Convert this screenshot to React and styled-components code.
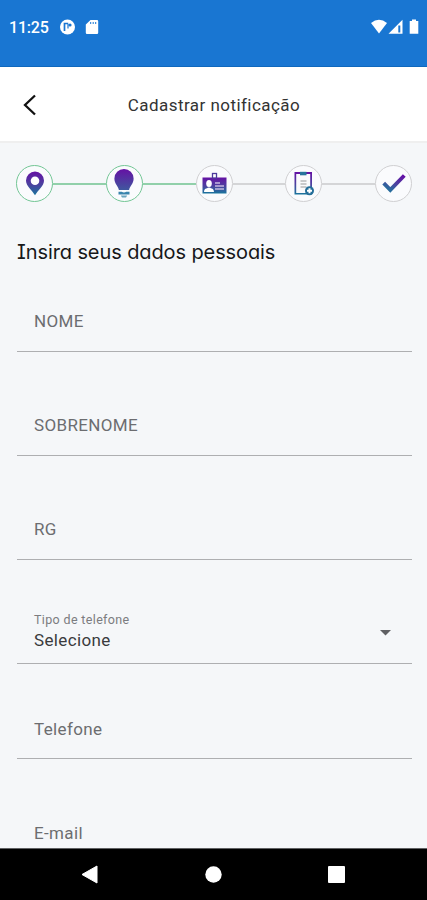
import { useState } from "react";
import styled, { createGlobalStyle } from "styled-components";

const GlobalStyle = createGlobalStyle`
* {
  box-sizing: border-box;
}
body {
  margin: 0;
  background: #f5f7f9;
  font-family: Roboto, sans-serif;
}
`;

const Screen = styled.div`
  display: flex;
  flex-direction: column;
  width: 100%;
  max-width: 427px;
  height: 900px;
  overflow: hidden;
  background: #f5f7f9;
`;

const StatusBar = styled.div`
  display: flex;
  align-items: center;
  justify-content: space-between;
  flex-shrink: 0;
  height: 67px;
  padding: 0 7px 13px 9px;
  background: #1976d2;
  border-bottom: 1px solid #0f68bd;
  color: white;
`;

const StatusGroup = styled.div`
  display: flex;
  align-items: center;
  svg {
    display: block;
  }
`;

const Clock = styled.span`
  width: 51px;
  font-size: 16px;
  font-weight: 500;
  line-height: 20px;
  letter-spacing: -0.2px;
  padding-top: 2px;
`;

const Header = styled.header`
  display: grid;
  grid-template-columns: 60px 1fr 59px;
  align-items: center;
  flex-shrink: 0;
  height: 76px;
  background: white;
  border-bottom: 2px solid #efefef;
`;

const BackButton = styled.button`
  display: flex;
  padding: 2px 0 0 22px;
  border: none;
  background: none;
`;

const HeaderTitle = styled.h1`
  margin: 0;
  padding-top: 1px;
  text-align: center;
  font-size: 17px;
  font-weight: 400;
  line-height: 22px;
  letter-spacing: 0.45px;
  color: #333;
`;

const Steps = styled.div`
  display: flex;
  align-items: center;
  flex-shrink: 0;
  padding: 22px 15px 0 16px;
`;

const StepCircle = styled.div`
  display: flex;
  flex-shrink: 0;
  width: 37px;
  height: 37px;
  border: 1.5px solid ${(props) => (props.$done ? "#73c695" : "#d0d0d2")};
  border-radius: 50%;
  background: #fafbfd;
  svg {
    display: block;
    margin: auto;
  }
`;

const StepLine = styled.div`
  flex: 1;
  height: 2px;
  background: ${(props) => (props.$done ? "#91d0aa" : "#d4d5d7")};
`;

const Form = styled.form`
  display: flex;
  flex-direction: column;
  flex: 1;
  min-height: 0;
  overflow: hidden;
  padding: 36px 15px 0 17px;
`;

const FormTitle = styled.h2`
  margin: 0 0 29px;
  font-family: Inter, sans-serif;
  font-size: 20px;
  font-weight: 400;
  font-feature-settings: "cv08", "cv11";
  line-height: 28px;
  letter-spacing: -0.1px;
  color: #17181a;
`;

const Field = styled.label`
  display: flex;
  align-items: center;
  flex-shrink: 0;
  height: 57px;
  margin-bottom: ${(props) => props.$gap || "47px"};
  padding: 0 17px ${(props) => props.$bottom || "4px"};
  border-bottom: 1px solid #aeafb1;
`;

const FieldText = styled.span`
  font-size: 17px;
  line-height: 20px;
  letter-spacing: 0.35px;
  color: #6c6d70;
`;

const SelectField = styled(Field)`
  justify-content: space-between;
  padding: 0 21px 4px 17px;
`;

const SelectContent = styled.span`
  display: flex;
  flex-direction: column;
  padding-bottom: 5px;
`;

const SelectLabel = styled.span`
  font-size: 12.5px;
  line-height: 18px;
  letter-spacing: 0.35px;
  color: #7b7c7f;
`;

const SelectValue = styled(FieldText)`
  line-height: 22px;
  color: #3a3b3d;
`;

const NavBar = styled.nav`
  display: flex;
  align-items: center;
  justify-content: space-between;
  flex-shrink: 0;
  height: 52px;
  padding: 0 82px 0 81px;
  border-top: 1px solid #606163;
  background: black;
  svg {
    display: block;
  }
`;

const Gradient = ({ id }) => (
  <linearGradient id={id} x1="0" y1="0" x2="0" y2="1">
    <stop offset="0" stopColor="#6511a4" />
    <stop offset="0.55" stopColor="#4b429f" />
    <stop offset="1" stopColor="#19769d" />
  </linearGradient>
);

const PinIcon = () => (
  <svg width="20" height="25" viewBox="0 0 20 25">
    <defs><Gradient id="pin" /></defs>
    <path d="M10 .5a9 9 0 0 0-9 9c0 5.800 6 9.500 9 14.800 3-5.300 9-9 9-14.800a9 9 0 0 0-9-9z" fill="url(#pin)" />
    <circle cx="10" cy="9.800" r="4.300" fill="#fff" />
  </svg>
);

const BulbIcon = () => (
  <svg width="20" height="30" viewBox="0 0 20 30">
    <defs>
      <linearGradient id="bulb" x1="0" y1="0" x2="0" y2="1">
        <stop offset="0" stopColor="#6511a4" />
        <stop offset="1" stopColor="#40579f" />
      </linearGradient>
    </defs>
    <path d="M10 0A9.600 9.600 0 0 0 .4 9.700c0 5 3.800 7 4.500 11.300h10.200c.7-4.300 4.500-6.300 4.500-11.300A9.600 9.600 0 0 0 10 0z" fill="url(#bulb)" />
    <path d="M4.500 22.800h3.200q2.300 1.600 4.600 0h3.200v2.600h-11z" fill="#3984ad" />
    <path d="M6.800 26.600h6.400L12 28.600H8z" fill="#6ba4bd" />
  </svg>
);

const BadgeIcon = () => (
  <svg width="25" height="23" viewBox="0 0 25 23">
    <defs><Gradient id="badge" /></defs>
    <path d="M.5 5.500h24v16H.5z" fill="url(#badge)" />
    <rect x="10.500" y="1.500" width="4" height="4.500" fill="#fff" stroke="#4c399c" strokeWidth="1.300" />
    <ellipse cx="7" cy="11.500" rx="2.800" ry="3.500" fill="#fff" />
    <path d="M2 20c.3-3.500 2-3.500 5-4.500 3 1 4.700 1 5 4.500z" fill="#fff" />
    <path d="M13 11h5M13 14h9M13 17h9" stroke="#c5b8df" strokeWidth="1.300" />
  </svg>
);

const ClipboardIcon = () => (
  <svg width="21" height="25" viewBox="-1 0 21 25">
    <defs><Gradient id="clip" /></defs>
    <path d="M.5 1h17.500v22.500H.5z" fill="url(#clip)" />
    <path d="M2.200 3h14v19h-14z" fill="#fafafc" />
    <path d="M6 .8h6.500v3.500H6z" fill="#28749c" />
    <path d="M6.500 10h6M6.500 13h6M6.500 16h6" stroke="#b9babb" strokeWidth="1.400" />
    <circle cx="15.500" cy="19.800" r="4.500" fill="#236d98" />
    <path d="M15.500 17.300v5M13 19.800h5" stroke="#fff" strokeWidth="2" />
  </svg>
);

const CheckIcon = () => (
  <svg width="24" height="20" viewBox="0 0 24 20">
    <defs>
      <linearGradient id="check" x1="1" y1="0" x2="0.3" y2="1">
        <stop offset="0" stopColor="#650ba6" />
        <stop offset="0.6" stopColor="#4b439f" />
        <stop offset="1" stopColor="#276c9d" />
      </linearGradient>
    </defs>
    <path d="M1.700 9.200l6.600 6.700L22.300 1.500" fill="none" stroke="url(#check)" strokeWidth="3.900" />
  </svg>
);

const steps = [
  { name: "local", icon: <PinIcon />, done: true },
  { name: "ideia", icon: <BulbIcon />, done: true },
  { name: "dados", icon: <BadgeIcon /> },
  { name: "resumo", icon: <ClipboardIcon /> },
  { name: "fim", icon: <CheckIcon /> },
];

function App() {
  const [phoneType] = useState("Selecione");

  return (
    <Screen>
      <GlobalStyle />
      <StatusBar>
        <StatusGroup>
          <Clock>11:25</Clock>
          <svg width="42" height="16" viewBox="0 0 42 16">
            <circle cx="7.500" cy="8" r="7.500" fill="#fff" />
            <path d="M4.500 12V4.500h3.800" fill="none" stroke="#1976d2" strokeWidth="1.700" />
            <path d="M8 5v4.500" stroke="#1976d2" strokeWidth="1.200" />
            <circle cx="10" cy="6" r="1.600" fill="#1976d2" />
            <path d="M30.500 1H37a1.200 1.200 0 0 1 1.200 1.200v11.600A1.200 1.200 0 0 1 37 15H27a1.200 1.200 0 0 1-1.200-1.200V5.500z" fill="#fff" />
            <path d="M30.700 3v2M33.200 3v2M35.700 3v2" stroke="#1976d2" strokeWidth="1" />
          </svg>
        </StatusGroup>
        <StatusGroup>
          <svg width="49" height="16" viewBox="0 0 49 16">
            <path d="M0 4Q8-2.500 16 4L8 14.500z" fill="#fff" />
            <path d="M17.500 14.700L31.500.8v13.900z" fill="#fff" />
            <path d="M28.300 6.500v7" stroke="#1976d2" strokeWidth="2" />
            <path d="M41 .5h4V2h2.300v12.700h-8.600V2H41z" fill="#fff" />
          </svg>
        </StatusGroup>
      </StatusBar>
      <Header>
        <BackButton aria-label="Voltar">
          <svg width="15" height="22" viewBox="0 0 15 22">
            <path d="M13 1.500L3 11l10 9.500" fill="none" stroke="#111" strokeWidth="2.300" />
          </svg>
        </BackButton>
        <HeaderTitle>Cadastrar notificação</HeaderTitle>
      </Header>
      <Steps>
        {steps.map((step, index) => [
          index > 0 && <StepLine key={step.name + "-line"} $done={index < 3} />,
          <StepCircle key={step.name} $done={step.done}>{step.icon}</StepCircle>,
        ])}
      </Steps>
      <Form>
        <FormTitle>Insira seus dados pessoais</FormTitle>
        <Field><FieldText>NOME</FieldText></Field>
        <Field><FieldText>SOBRENOME</FieldText></Field>
        <Field><FieldText>RG</FieldText></Field>
        <SelectField $gap="38px">
          <SelectContent>
            <SelectLabel>Tipo de telefone</SelectLabel>
            <SelectValue>{phoneType}</SelectValue>
          </SelectContent>
          <svg width="11" height="6" viewBox="0 0 11 6">
            <path d="M0 0h11L5.500 5.500z" fill="#5f6063" />
          </svg>
        </SelectField>
        <Field $bottom="2px"><FieldText>Telefone</FieldText></Field>
        <Field $bottom="2px"><FieldText>E-mail</FieldText></Field>
      </Form>
      <NavBar>
        <svg width="17" height="19" viewBox="0 0 17 19">
          <path d="M16 1v17L1 9.500z" fill="#fff" stroke="#fff" strokeLinejoin="round" />
        </svg>
        <svg width="17" height="17" viewBox="0 0 17 17">
          <circle cx="8.500" cy="8.500" r="8.200" fill="#fff" />
        </svg>
        <svg width="17" height="17" viewBox="0 0 17 17">
          <rect width="17" height="17" rx="1" fill="#fff" />
        </svg>
      </NavBar>
    </Screen>
  );
}

export default App;
